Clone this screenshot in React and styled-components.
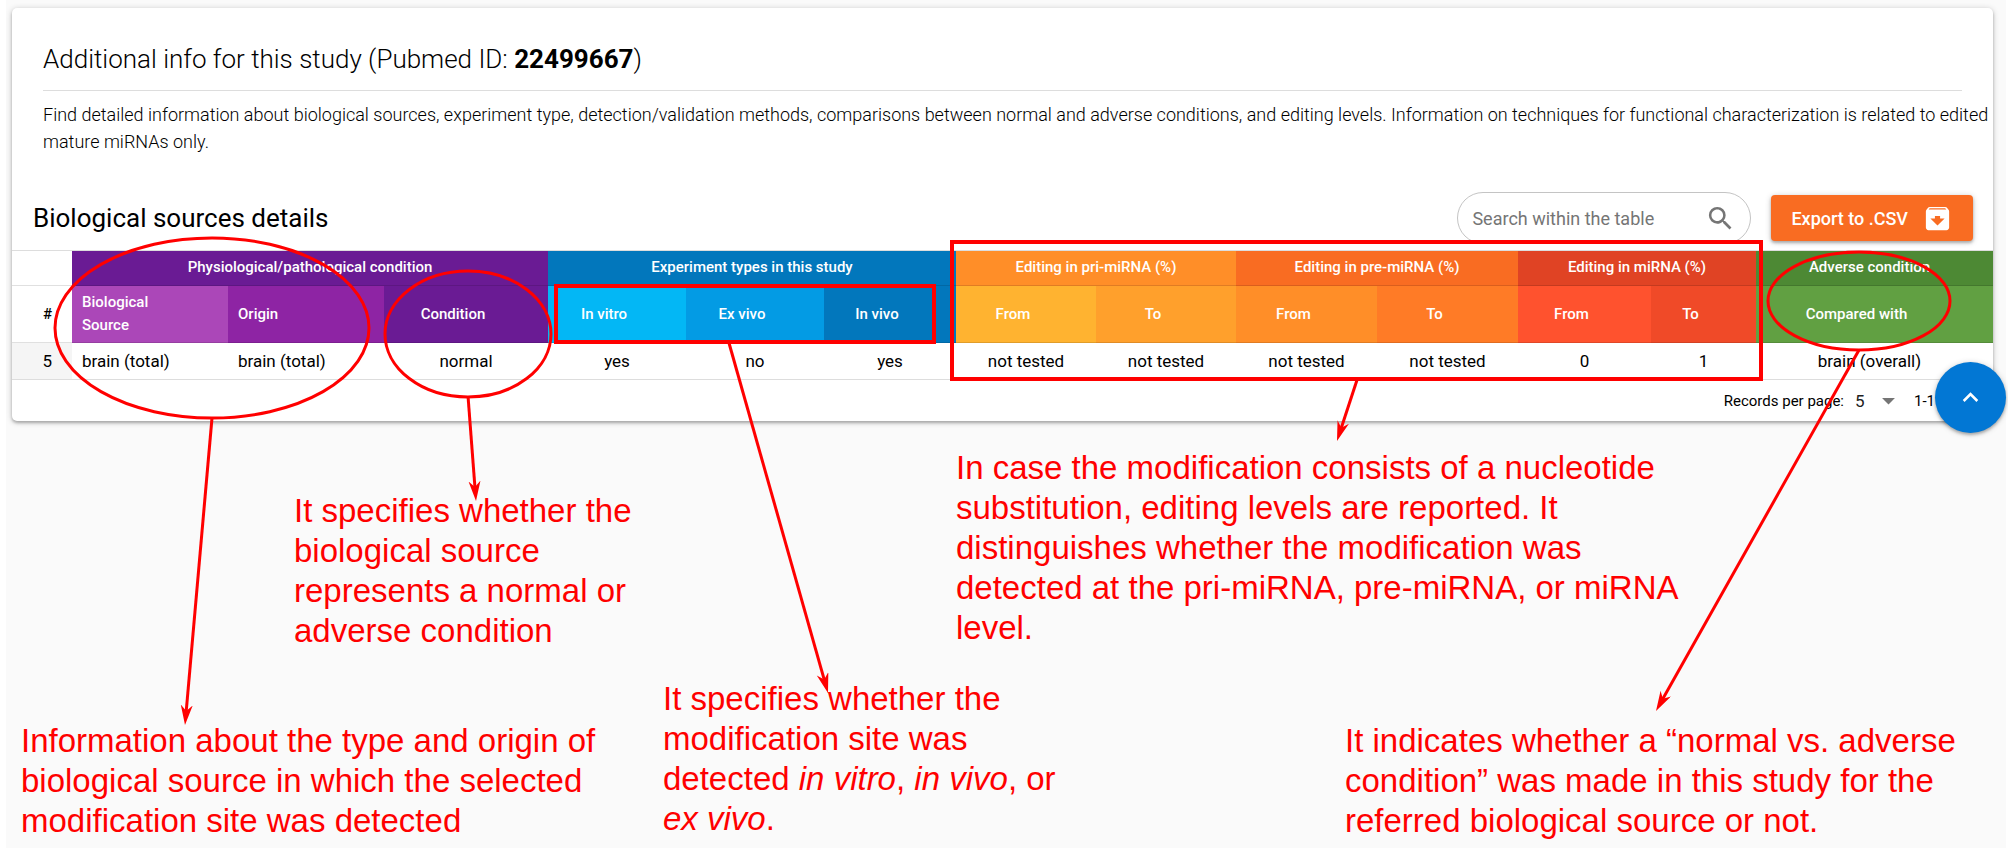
import React from "react";
import styled, { createGlobalStyle } from "styled-components";
import { MdArchive, MdArrowDropDown, MdKeyboardArrowUp, MdSearch } from "react-icons/md";

const GlobalStyle = createGlobalStyle`
  * { box-sizing: border-box; }
  body {
    margin: 0;
    background: #ffffff;
    color: #000000;
    font-family: Roboto, "Liberation Sans", sans-serif;
  }
`;

const Page = styled.div`
  position: relative;
  padding: 0 2px 14px 6px;
`;

const Backdrop = styled.main`
  padding: 8px 13px 7px 6px;
  background: #fafafa;
`;

const Card = styled.section`
  position: relative;
  background: #ffffff;
  border-radius: 5px;
  box-shadow: 0 1px 6px rgba(0, 0, 0, 0.2), 0 2px 3px rgba(0, 0, 0, 0.24);
`;

const Intro = styled.header`
  padding: 31px 31px 37px;
`;

const StudyTitle = styled.h1`
  margin: 0;
  padding-bottom: 11px;
  border-bottom: 1px solid #dddddd;
  font-size: 26px;
  font-weight: 300;
  line-height: 40px;
`;

const StudyId = styled.strong`
  font-weight: 700;
`;

const Description = styled.p`
  margin: 10px -28px 0 0;
  font-size: 18px;
  font-weight: 300;
  line-height: 27px;
`;

const Toolbar = styled.div`
  display: flex;
  align-items: center;
  gap: 20px;
  padding: 0 20px 0 21px;
  margin-bottom: 6px;
`;

const TableTitle = styled.h2`
  flex: 1;
  margin: 0;
  font-size: 26px;
  font-weight: 400;
  line-height: 32px;
`;

const SearchBox = styled.label`
  display: flex;
  align-items: center;
  width: 294px;
  height: 52px;
  padding: 0 14px;
  border: 1px solid #c4c4c4;
  border-radius: 26px;
  color: #757575;
`;

const SearchInput = styled.input`
  flex: 1;
  min-width: 0;
  padding: 0;
  border: 0;
  outline: 0;
  background: none;
  font: 400 18px Roboto, "Liberation Sans", sans-serif;
  &::placeholder { color: #757575; opacity: 1; }
`;

const ExportButton = styled.button`
  display: flex;
  align-items: center;
  gap: 14px;
  height: 46px;
  padding: 0 20px;
  border: 0;
  border-radius: 4px;
  background: #f96c22;
  color: #ffffff;
  font: 500 18px Roboto, "Liberation Sans", sans-serif;
  box-shadow: 0 1px 6px rgba(0, 0, 0, 0.2), 0 2px 3px rgba(0, 0, 0, 0.24);
`;

const Table = styled.table`
  width: 100%;
  table-layout: fixed;
  border-collapse: separate;
  border-spacing: 0;
  border-top: 1px solid #dddddd;
`;

const Col = styled.col`
  width: calc(${(p) => p.$share} / 1981 * 100%);
`;

const GroupCell = styled.th`
  height: 35px;
  padding: 0 10px;
  padding-right: ${(p) => (p.$last ? 20 : 10)}px;
  border-bottom: 1px solid rgba(0, 0, 0, 0.12);
  background: ${(p) => p.$bg || "transparent"};
  color: #ffffff;
  font-size: 15px;
  font-weight: 500;
  line-height: 32px;
  vertical-align: top;
`;

const HeadCell = styled.th`
  height: 57px;
  padding: 0 36px 0 10px;
  padding-right: ${(p) => (p.$last ? 46 : 36)}px;
  border-bottom: 1px solid rgba(0, 0, 0, 0.12);
  background: ${(p) => p.$bg};
  color: #ffffff;
  font-size: 15px;
  font-weight: 500;
  line-height: 23px;
  text-align: ${(p) => p.$align || "center"};
`;

const IndexHead = styled(HeadCell)`
  padding: 0 20px 0 0;
  color: #000000;
  text-align: right;
`;

const Cell = styled.td`
  height: 37px;
  padding: 0 10px;
  padding-right: ${(p) => (p.$last ? 20 : 10)}px;
  border-bottom: 1px solid #dddddd;
  font-size: 17px;
  text-align: ${(p) => p.$align || "center"};
`;

const IndexCell = styled(Cell)`
  padding: 0 20px 0 0;
  background: #f5f5f5;
  text-align: right;
`;

const Footer = styled.footer`
  display: flex;
  align-items: center;
  justify-content: flex-end;
  height: 41px;
  padding-right: 58px;
  font-size: 15px;
`;

const SelectWrap = styled.span`
  display: flex;
  align-items: center;
  margin: 0 10px 0 11px;
  color: #757575;
`;

const PageSize = styled.select`
  width: 18px;
  padding: 0;
  border: 0;
  appearance: none;
  background: none;
  color: #212121;
  font: 400 17px Roboto, "Liberation Sans", sans-serif;
`;

const ScrollTop = styled.button`
  position: absolute;
  right: -13px;
  bottom: -12px;
  display: grid;
  place-items: center;
  width: 71px;
  height: 71px;
  padding: 0;
  border: 0;
  border-radius: 50%;
  background: #0277d4;
  color: #ffffff;
  box-shadow: 0 1px 6px rgba(0, 0, 0, 0.2), 0 2px 3px rgba(0, 0, 0, 0.24);
`;

const Notes = styled.div`
  display: grid;
  grid-template-columns:
    minmax(0, 9fr) minmax(0, 273fr) minmax(0, 369fr)
    minmax(0, 293fr) minmax(0, 389fr) minmax(0, 661fr);
  grid-template-rows: 43px 188px 42px auto;
  margin: 27px -13px 0 0;
`;

const Note = styled.p`
  grid-area: ${(p) => p.$area};
  margin: 0;
  color: #ff0000;
  font-family: "Liberation Sans", Arial, sans-serif;
  font-size: 33px;
  line-height: 40px;
  white-space: nowrap;
`;

const Marks = styled.svg`
  position: absolute;
  top: 0;
  left: 0;
  width: 100%;
  height: 862px;
  pointer-events: none;
`;

const columns = [
  { label: "#", share: 60, value: "5" },
  { label: "Biological Source", share: 156, bg: "#ab47b8", value: "brain (total)", align: "left" },
  { label: "Origin", share: 156, bg: "#8e24a4", value: "brain (total)", align: "left" },
  { label: "Condition", share: 164, bg: "#6a1b94", value: "normal" },
  { label: "In vitro", share: 138, bg: "#03b7f5", value: "yes" },
  { label: "Ex vivo", share: 138, bg: "#039be4", value: "no" },
  { label: "In vivo", share: 132, bg: "#0277bc", value: "yes" },
  { label: "From", share: 140, bg: "#ffb330", value: "not tested" },
  { label: "To", share: 140, bg: "#ffa02c", value: "not tested" },
  { label: "From", share: 141, bg: "#ff8e28", value: "not tested" },
  { label: "To", share: 141, bg: "#ff7b26", value: "not tested" },
  { label: "From", share: 133, bg: "#ff522e", value: "0" },
  { label: "To", share: 105, bg: "#f04a28", value: "1" },
  { label: "Compared with", share: 237, bg: "#61a042", value: "brain (overall)", last: true },
];

const groups = [
  { label: "Physiological/pathological condition", span: 3, bg: "#6a1b94" },
  { label: "Experiment types in this study", span: 3, bg: "#0277bc" },
  { label: "Editing in pri-miRNA (%)", span: 2, bg: "#ff8e28" },
  { label: "Editing in pre-miRNA (%)", span: 2, bg: "#f96c22" },
  { label: "Editing in miRNA (%)", span: 2, bg: "#e04324" },
  { label: "Adverse condition", span: 1, bg: "#4d8934", last: true },
];

function SourcesTable() {
  return (
    <Table>
      <colgroup>
        {columns.map((c, i) => <Col key={i} $share={c.share} />)}
      </colgroup>
      <thead>
        <tr>
          <GroupCell as="td" />
          {groups.map((g) => (
            <GroupCell key={g.label} colSpan={g.span} scope="colgroup" $bg={g.bg} $last={g.last}>{g.label}</GroupCell>
          ))}
        </tr>
        <tr>
          {columns.map((c, i) =>
            i === 0 ? (
              <IndexHead key={i} scope="col">{c.label}</IndexHead>
            ) : (
              <HeadCell key={i} scope="col" $bg={c.bg} $align={c.align} $last={c.last}>{c.label}</HeadCell>
            )
          )}
        </tr>
      </thead>
      <tbody>
        <tr>
          {columns.map((c, i) =>
            i === 0 ? (
              <IndexCell key={i}>{c.value}</IndexCell>
            ) : (
              <Cell key={i} $align={c.align} $last={c.last}>{c.value}</Cell>
            )
          )}
        </tr>
      </tbody>
    </Table>
  );
}

const arrows = [
  [212, 418, 185, 725],
  [468, 396, 476, 501],
  [729, 343, 828, 693],
  [1357, 380, 1337, 441],
  [1859, 350, 1656, 711],
];

function Highlights() {
  return (
    <Marks viewBox="0 0 2008 862" preserveAspectRatio="none" aria-hidden="true">
      <defs>
        <marker id="head" markerUnits="userSpaceOnUse" markerWidth="22" markerHeight="14" refX="20" refY="6" orient="auto">
          <path d="M0 0 L20 6 L0 12 L6 6 Z" fill="#ff0000" />
        </marker>
      </defs>
      <g fill="none" stroke="#ff0000" strokeWidth="3">
        <ellipse cx="212" cy="328" rx="157" ry="90" />
        <ellipse cx="468" cy="334" rx="83" ry="63" />
        <ellipse cx="1859" cy="301" rx="91" ry="49" />
        <rect x="556" y="286" width="378" height="56" strokeWidth="4" />
        <rect x="952" y="242" width="809" height="137" strokeWidth="4" />
      </g>
      {arrows.map(([x1, y1, x2, y2]) => {
        const len = Math.hypot(x2 - x1, y2 - y1);
        const dx = (x2 - x1) / len;
        const dy = (y2 - y1) / len;
        return (
          <g key={x1}>
            <line x1={x1} y1={y1} x2={x2 - dx * 10} y2={y2 - dy * 10} stroke="#ff0000" strokeWidth="3" />
            <line x1={x1} y1={y1} x2={x2} y2={y2} stroke="none" markerEnd="url(#head)" />
          </g>
        );
      })}
    </Marks>
  );
}

export default function App() {
  return (
    <>
      <GlobalStyle />
      <Page>
        <Backdrop>
          <Card>
            <Intro>
              <StudyTitle>Additional info for this study (Pubmed ID: <StudyId>22499667</StudyId>)</StudyTitle>
              <Description>
                Find detailed information about biological sources, experiment type, detection/validation methods, comparisons between normal and adverse conditions, and editing levels. Information on techniques for functional characterization is related to edited mature miRNAs only.
              </Description>
            </Intro>
            <Toolbar>
              <TableTitle>Biological sources details</TableTitle>
              <SearchBox>
                <SearchInput type="search" placeholder="Search within the table" aria-label="Search within the table" />
                <MdSearch size={31} />
              </SearchBox>
              <ExportButton type="button">Export to .CSV<MdArchive size={31} /></ExportButton>
            </Toolbar>
            <SourcesTable />
            <Footer>
              <label htmlFor="page-size">Records per page:</label>
              <SelectWrap>
                <PageSize id="page-size" defaultValue="5">
                  <option>5</option>
                </PageSize>
                <MdArrowDropDown size={31} />
              </SelectWrap>
              <span>1-1</span>
            </Footer>
            <ScrollTop type="button" aria-label="Back to top"><MdKeyboardArrowUp size={31} /></ScrollTop>
          </Card>
          <Notes>
            <Note $area="1 / 5 / 4 / 7">
              In case the modification consists of a nucleotide<br />
              substitution, editing levels are reported. It<br />
              distinguishes whether the modification was<br />
              detected at the pri-miRNA, pre-miRNA, or miRNA<br />
              level.
            </Note>
            <Note $area="2 / 3 / 4 / 4">
              It specifies whether the<br />
              biological source<br />
              represents a normal or<br />
              adverse condition
            </Note>
            <Note $area="3 / 4 / 5 / 6">
              It specifies whether the<br />
              modification site was<br />
              detected <i>in vitro</i>, <i>in vivo</i>, or<br />
              <i>ex vivo</i>.
            </Note>
            <Note $area="4 / 2 / 5 / 4">
              Information about the type and origin of<br />
              biological source in which the selected<br />
              modification site was detected
            </Note>
            <Note $area="4 / 6 / 5 / 7">
              It indicates whether a “normal vs. adverse<br />
              condition” was made in this study for the<br />
              referred biological source or not.
            </Note>
          </Notes>
        </Backdrop>
        <Highlights />
      </Page>
    </>
  );
}
